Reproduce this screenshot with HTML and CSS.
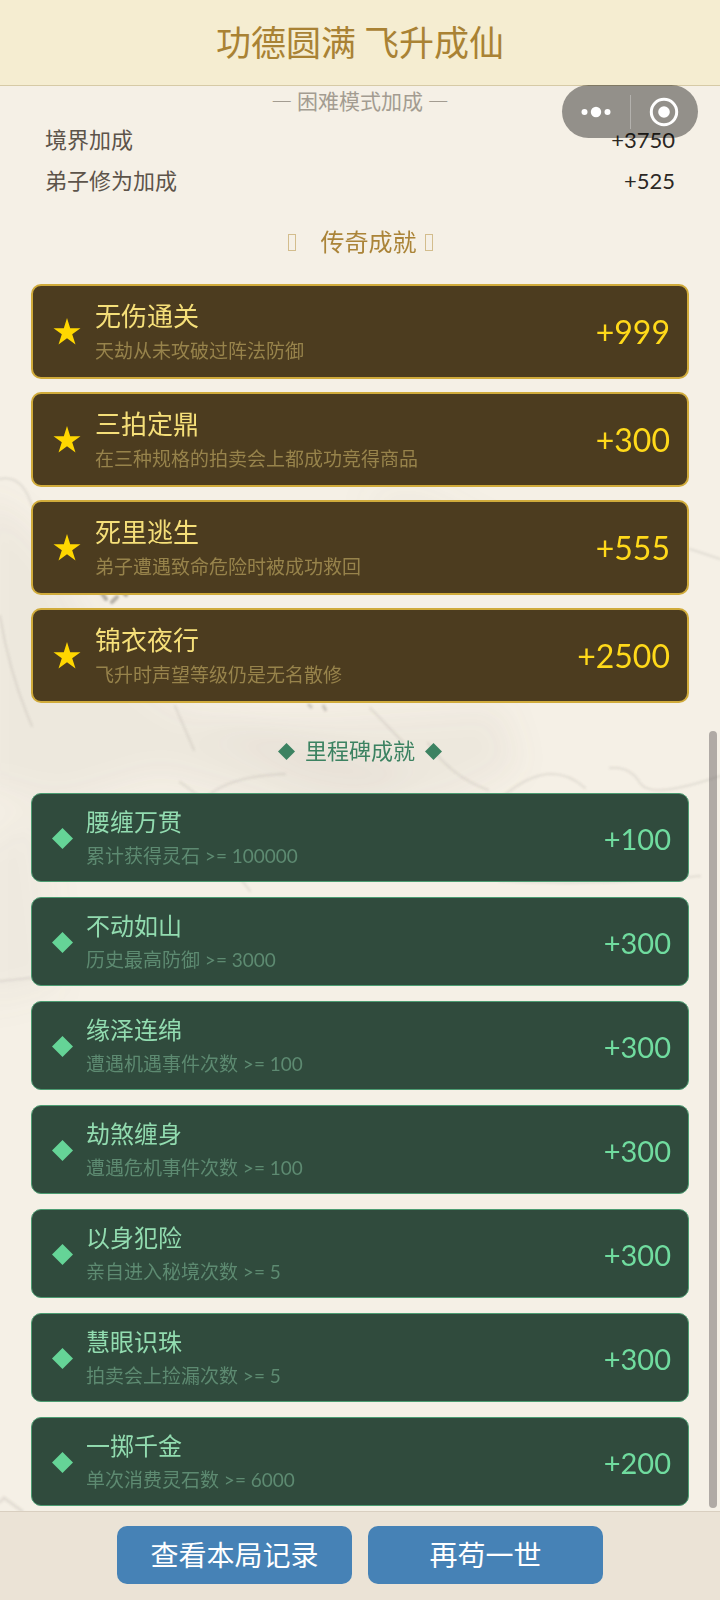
FILE: index.html
```html
<!DOCTYPE html>
<html lang="zh-CN">
<head>
<meta charset="utf-8">
<meta name="viewport" content="width=device-width, initial-scale=1">
<title>功德圆满 飞升成仙</title>
<link rel="stylesheet" href="styles.css">
</head>
<body>
<div class="app">
  <header class="header">
    <h1 class="title">功德圆满 飞升成仙</h1>
    <div class="capsule">
      <button class="capsule-btn" type="button" aria-label="更多">
        <svg width="32" height="32" viewBox="0 0 32 32" fill="#fff"><circle cx="4.500" cy="16" r="3"/><circle cx="16" cy="16" r="5.200"/><circle cx="27.500" cy="16" r="3"/></svg>
      </button>
      <span class="capsule-line"></span>
      <button class="capsule-btn" type="button" aria-label="关闭">
        <svg width="32" height="32" viewBox="0 0 32 32" fill="#fff"><circle cx="16" cy="16" r="12.700" fill="none" stroke="#fff" stroke-width="3"/><circle cx="16" cy="16" r="5.800"/></svg>
      </button>
    </div>
  </header>

  <main class="content">
    <svg class="ink" viewBox="0 0 720 1426" preserveAspectRatio="xMidYMin slice" aria-hidden="true">
      <defs>
        <filter id="soft" x="-30%" y="-30%" width="160%" height="160%"><feGaussianBlur stdDeviation="16"/></filter>
        <filter id="line"><feGaussianBlur stdDeviation="1"/></filter>
      </defs>
      <g filter="url(#soft)" fill="#8a8070">
        <path d="M-20 410Q40 430 70 500T180 620L420 690 340 740 160 690 60 720-20 700Z" opacity=".07"/>
        <path d="M360 420Q400 390 450 420T560 470L500 480Z" opacity=".06"/>
        <path d="M200 640L500 620 520 680 440 720 300 690Z" opacity=".07"/>
        <path d="M-20 760L40 720 60 900-20 920Z" opacity=".06"/>
      </g>
      <g filter="url(#line)">
        <g fill="none" stroke="#6f675c" stroke-width="2" opacity=".13" stroke-linecap="round">
          <path d="M0 393Q22 388 32 420M0 530Q10 590 32 640M175 620L194 664M370 622L403 656M428 657Q450 690 488 704M180 696L204 714Q225 690 285 688M295 710L308 735 335 737M502 711Q550 670 585 702M610 682Q630 680 640 697T720 690M225 782Q240 790 250 805M500 795Q600 800 700 790M0 895L30 892M690 463L720 473"/>
          <path d="M0 1416L4 1412 22 1425" stroke-width="3"/>
        </g>
        <g stroke="#59534c" stroke-width="4" stroke-linecap="round" opacity=".4"><path d="M101 506L106 513M112 516L117 511M122 505L126 509"/></g>
        <path d="M308 618L312 622M323 619L326 625" stroke="#59534c" stroke-width="3" opacity=".25"/>
      </g>
    </svg>

    <section class="bonus">
      <h2 class="bonus-title">— 困难模式加成 —</h2>
      <dl class="bonus-list">
        <div class="bonus-row"><dt>境界加成</dt><dd>+3750</dd></div>
        <div class="bonus-row"><dt>弟子修为加成</dt><dd>+525</dd></div>
      </dl>
    </section>

    <section class="group legend">
      <h2 class="group-title"><span class="box box-wide"></span>传奇成就<span class="box"></span></h2>
      <ul class="cards">
        <li class="card"><svg class="mark" viewBox="0 0 28 28"><use href="#star"/></svg><div class="info"><h3 class="name">无伤通关</h3><p class="desc">天劫从未攻破过阵法防御</p></div><span class="score">+999</span></li>
        <li class="card"><svg class="mark" viewBox="0 0 28 28"><use href="#star"/></svg><div class="info"><h3 class="name">三拍定鼎</h3><p class="desc">在三种规格的拍卖会上都成功竞得商品</p></div><span class="score">+300</span></li>
        <li class="card"><svg class="mark" viewBox="0 0 28 28"><use href="#star"/></svg><div class="info"><h3 class="name">死里逃生</h3><p class="desc">弟子遭遇致命危险时被成功救回</p></div><span class="score">+555</span></li>
        <li class="card"><svg class="mark" viewBox="0 0 28 28"><use href="#star"/></svg><div class="info"><h3 class="name">锦衣夜行</h3><p class="desc">飞升时声望等级仍是无名散修</p></div><span class="score">+2500</span></li>
      </ul>
    </section>

    <section class="group milestone">
      <h2 class="group-title"><svg class="gem" viewBox="0 0 20 20"><use href="#diamond"/></svg>里程碑成就<svg class="gem" viewBox="0 0 20 20"><use href="#diamond"/></svg></h2>
      <ul class="cards">
        <li class="card"><svg class="mark" viewBox="0 0 20 20"><use href="#diamond"/></svg><div class="info"><h3 class="name">腰缠万贯</h3><p class="desc">累计获得灵石 &gt;= 100000</p></div><span class="score">+100</span></li>
        <li class="card"><svg class="mark" viewBox="0 0 20 20"><use href="#diamond"/></svg><div class="info"><h3 class="name">不动如山</h3><p class="desc">历史最高防御 &gt;= 3000</p></div><span class="score">+300</span></li>
        <li class="card"><svg class="mark" viewBox="0 0 20 20"><use href="#diamond"/></svg><div class="info"><h3 class="name">缘泽连绵</h3><p class="desc">遭遇机遇事件次数 &gt;= 100</p></div><span class="score">+300</span></li>
        <li class="card"><svg class="mark" viewBox="0 0 20 20"><use href="#diamond"/></svg><div class="info"><h3 class="name">劫煞缠身</h3><p class="desc">遭遇危机事件次数 &gt;= 100</p></div><span class="score">+300</span></li>
        <li class="card"><svg class="mark" viewBox="0 0 20 20"><use href="#diamond"/></svg><div class="info"><h3 class="name">以身犯险</h3><p class="desc">亲自进入秘境次数 &gt;= 5</p></div><span class="score">+300</span></li>
        <li class="card"><svg class="mark" viewBox="0 0 20 20"><use href="#diamond"/></svg><div class="info"><h3 class="name">慧眼识珠</h3><p class="desc">拍卖会上捡漏次数 &gt;= 5</p></div><span class="score">+300</span></li>
        <li class="card"><svg class="mark" viewBox="0 0 20 20"><use href="#diamond"/></svg><div class="info"><h3 class="name">一掷千金</h3><p class="desc">单次消费灵石数 &gt;= 6000</p></div><span class="score">+200</span></li>
      </ul>
    </section>
    <span class="thumb"></span>
  </main>

  <footer class="footer">
    <button class="action" type="button">查看本局记录</button>
    <button class="action" type="button">再苟一世</button>
  </footer>
</div>
<svg class="symbols" aria-hidden="true">
  <symbol id="star" viewBox="0 0 28 28"><path d="M14 0L17.200 10.200H27.500L19.200 16.300 22.500 26.500 14 20.300 5.500 26.500 8.800 16.300 .5 10.200H10.800Z"/></symbol>
  <symbol id="diamond" viewBox="0 0 20 20"><path d="M10 0L20 10 10 20 0 10Z"/></symbol>
</svg>
</body>
</html>
```
FILE: styles.css
```css
* {
  box-sizing: border-box;
  margin: 0;
  padding: 0;
}

body {
  background: #f5f0e6;
  font-family: Lato, "Noto Sans CJK SC", sans-serif;
}

h1, h2, h3 {
  font-weight: 400;
}

ul {
  list-style: none;
}

button {
  border: 0;
  background: none;
  font: inherit;
  color: inherit;
}

.app {
  display: flex;
  flex-direction: column;
  min-height: 100vh;
}

.header {
  position: relative;
  z-index: 2;
  padding: 17px 16px 20px;
  border-bottom: 1px solid #d6caa6;
  background: #f5edd1;
  text-align: center;
}

.title {
  color: #a98234;
  font-family: "Noto Sans CJK SC", sans-serif;
  font-size: 35px;
  line-height: 48px;
}

.capsule {
  position: absolute;
  top: 100%;
  right: 22px;
  display: flex;
  align-items: center;
  width: 136px;
  height: 53px;
  border-radius: 27px;
  background: rgba(0, 0, 0, 0.4);
}

.capsule-btn {
  display: flex;
  flex: 1;
  justify-content: center;
}

.capsule-line {
  width: 1px;
  height: 34px;
  background: rgba(255, 255, 255, 0.3);
}

.content {
  position: relative;
  flex: 1;
  padding: 0 31px 4px;
}

.ink {
  position: absolute;
  inset: 0;
  width: 100%;
  height: 100%;
}

.bonus,
.group {
  position: relative;
}

.bonus {
  padding: 0 14px;
}

.bonus-title {
  margin-bottom: 5px;
  color: #a39c91;
  font-family: "Noto Sans CJK SC", sans-serif;
  font-size: 21px;
  line-height: 28px;
  text-align: center;
}

.bonus-row {
  display: flex;
  justify-content: space-between;
  color: #5d544a;
  font-size: 22px;
  line-height: 41px;
}

.bonus-row dd {
  color: #2c2824;
}

.group-title {
  display: flex;
  align-items: center;
  justify-content: center;
  gap: 8px;
  margin-bottom: 24px;
  line-height: 36px;
}

.legend {
  padding-top: 23px;
}

.milestone {
  padding-top: 30px;
}

.legend .group-title {
  color: #ab8438;
  font-size: 24px;
}

.milestone .group-title {
  gap: 10px;
  color: #3c8261;
  font-size: 22px;
}

.box {
  width: 8px;
  height: 17px;
  border: 1px solid #d3bd8d;
}

.box-wide {
  margin-right: 17px;
}

.gem {
  width: 17px;
  height: 17px;
  fill: #3c8261;
}

.cards {
  display: grid;
  gap: 13px;
}

.card {
  display: flex;
  align-items: center;
  gap: 14px;
  padding: 10px 17px 10px 20px;
  border: 2px solid #d0ab3b;
  border-radius: 10px;
  background: #4c3c1f;
}

.mark {
  flex: none;
  width: 28px;
  height: 28px;
  fill: #ffd700;
}

.info {
  flex: 1;
}

.name {
  padding-top: 2px;
  color: #f5df79;
  font-size: 26px;
  line-height: 36px;
}

.desc {
  color: #97834b;
  font-size: 19px;
  line-height: 33px;
}

.score {
  color: #ffd91a;
  font-size: 32px;
}

.milestone .cards {
  gap: 15px;
}

.milestone .card {
  gap: 13px;
  padding: 10px 17px 9px 20px;
  border: 1px solid #4c9c72;
  background: #304b3d;
}

.milestone .mark {
  width: 21px;
  height: 21px;
  fill: #65d497;
}

.milestone .name {
  padding-top: 1px;
  color: #92dcb0;
  font-size: 24px;
  line-height: 34px;
}

.milestone .desc {
  color: #5d8a71;
}

.milestone .score {
  color: #70dc9f;
  font-size: 29px;
}

.thumb {
  position: absolute;
  top: 645px;
  right: 3px;
  bottom: 3px;
  width: 8px;
  border-radius: 4px;
  background: rgba(100, 95, 95, 0.48);
}

.footer {
  position: relative;
  display: flex;
  justify-content: center;
  gap: 16px;
  padding: 14px 16px 16px;
  border-top: 1px solid #d9cfc0;
  background: #ebe3d6;
}

.action {
  width: 235px;
  border-radius: 10px;
  background: #4682b6;
  color: #fff;
  font-size: 28px;
  line-height: 58px;
}

.symbols {
  display: none;
}
```
